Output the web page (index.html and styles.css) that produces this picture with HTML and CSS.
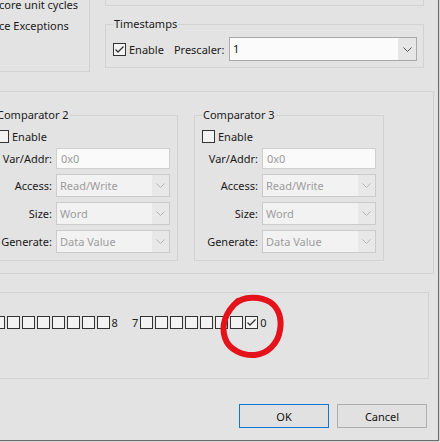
FILE: index.html
```html
<!DOCTYPE html>
<html>
  <head>
    <title>Trace Configuration</title>
    <link rel="stylesheet" href="styles.css">
  </head>

  <body>
    <div class="dialog">
      <div class="sheet">
        <div class="top-row">
          <div class="group trace">
            <div class="option">core unit cycles</div>
            <div class="option">ce Exceptions</div>
          </div>
          <div class="right-col">
            <div class="group itm"></div>
            <div class="group timestamps">
              <div class="legend">Timestamps</div>
              <div class="ts-row">
                <span class="check">
                  <svg width="11" height="11" viewBox="0 0 11 11"><path d="M1.5 5.5 L4 8 L9.5 2.5" /></svg>
                </span>
                <span class="check-label">Enable</span>
                <span class="prescaler-label">Prescaler:</span>
                <div class="combo ts-combo">
                  <span class="combo-value">1</span>
                  <span class="combo-btn">
                    <svg width="9" height="5" viewBox="0 0 9 5"><polyline points="0.5,0.5 4.5,4.5 8.5,0.5" /></svg>
                  </span>
                </div>
              </div>
            </div>
          </div>
        </div>

        <div class="group watchpoints">
          <div class="group comparator">
            <div class="legend">Comparator 2</div>
            <div class="enable-row">
              <span class="check"></span>
              <span class="check-label">Enable</span>
            </div>
            <div class="field">
              <span class="field-label">Var/Addr:</span>
              <div class="input">0x0</div>
            </div>
            <div class="field">
              <span class="field-label">Access:</span>
              <div class="combo disabled">
                <span class="combo-value">Read/Write</span>
                <span class="combo-btn"><svg width="9" height="5" viewBox="0 0 9 5"><polyline points="0.5,0.5 4.5,4.5 8.5,0.5" /></svg></span>
              </div>
            </div>
            <div class="field">
              <span class="field-label">Size:</span>
              <div class="combo disabled">
                <span class="combo-value">Word</span>
                <span class="combo-btn"><svg width="9" height="5" viewBox="0 0 9 5"><polyline points="0.5,0.5 4.5,4.5 8.5,0.5" /></svg></span>
              </div>
            </div>
            <div class="field">
              <span class="field-label">Generate:</span>
              <div class="combo disabled">
                <span class="combo-value">Data Value</span>
                <span class="combo-btn"><svg width="9" height="5" viewBox="0 0 9 5"><polyline points="0.5,0.5 4.5,4.5 8.5,0.5" /></svg></span>
              </div>
            </div>
          </div>

          <div class="group comparator">
            <div class="legend">Comparator 3</div>
            <div class="enable-row">
              <span class="check"></span>
              <span class="check-label">Enable</span>
            </div>
            <div class="field">
              <span class="field-label">Var/Addr:</span>
              <div class="input">0x0</div>
            </div>
            <div class="field">
              <span class="field-label">Access:</span>
              <div class="combo disabled">
                <span class="combo-value">Read/Write</span>
                <span class="combo-btn"><svg width="9" height="5" viewBox="0 0 9 5"><polyline points="0.5,0.5 4.5,4.5 8.5,0.5" /></svg></span>
              </div>
            </div>
            <div class="field">
              <span class="field-label">Size:</span>
              <div class="combo disabled">
                <span class="combo-value">Word</span>
                <span class="combo-btn"><svg width="9" height="5" viewBox="0 0 9 5"><polyline points="0.5,0.5 4.5,4.5 8.5,0.5" /></svg></span>
              </div>
            </div>
            <div class="field">
              <span class="field-label">Generate:</span>
              <div class="combo disabled">
                <span class="combo-value">Data Value</span>
                <span class="combo-btn"><svg width="9" height="5" viewBox="0 0 9 5"><polyline points="0.5,0.5 4.5,4.5 8.5,0.5" /></svg></span>
              </div>
            </div>
          </div>
        </div>

        <div class="group port-enable">
          <div class="bits">
            <div class="byte">
              <span class="bit-num">15</span>
              <span class="check"></span><span class="check"></span><span class="check"></span><span class="check"></span>
              <span class="check"></span><span class="check"></span><span class="check"></span><span class="check"></span>
              <span class="bit-num">8</span>
            </div>
            <div class="byte">
              <span class="bit-num">7</span>
              <span class="check"></span><span class="check"></span><span class="check"></span><span class="check"></span>
              <span class="check"></span><span class="check"></span><span class="check"></span>
              <span class="check">
                <svg width="11" height="11" viewBox="0 0 11 11"><path d="M1.5 5.5 L4 8 L9.5 2.5" /></svg>
              </span>
              <span class="bit-num">0</span>
            </div>
          </div>
        </div>

        <div class="buttons">
          <button class="btn btn-default">OK</button>
          <button class="btn">Cancel</button>
        </div>
      </div>

      <!-- hand drawn marker around port 0 -->
      <svg class="marker" width="75" height="70" viewBox="0 0 75 70">
        <path d="M20 12 C28 4, 45 4, 55 10 C64 16, 67 27, 65 38 C63 52, 52 62, 40 63 C28 64, 14 58, 10 46 C6 34, 10 20, 23 9" />
      </svg>
    </div>
  </body>
</html>
```

FILE: styles.css
```css
body {
  margin: 0;
  background-color: #d6d6d6;
  color: #1a1a1a;
  font-family: "Noto Sans", "Liberation Sans", sans-serif;
  font-size: 11px;
}

.dialog {
  position: relative;
  width: 438px;
  height: 440px;
  background-color: #e3e3e3;
  border-right: 1px solid #6c6c6c;
  border-bottom: 1px solid #6c6c6c;
  overflow: hidden;
}

/* the visible part starts a bit left of and above the window */
.sheet {
  margin: -20px 0 0 -20px;
}

.group {
  box-sizing: border-box;
  border: 1px solid #d2d2d2;
}

.legend {
  width: fit-content;
  margin: -9px 0 -7px 7px;
  padding: 0 1px;
  line-height: 16px;
  background-color: #e3e3e3;
}

.top-row {
  display: flex;
}

.trace {
  width: 110px;
  height: 92px;
  padding: 16px 0 0 18px;
}

.option {
  line-height: 16px;
  white-space: nowrap;
}

.option + .option {
  margin-top: 5px;
}

.right-col {
  width: 319px;
  margin-left: 15px;
}

.itm {
  height: 26px;
}

.timestamps {
  height: 44px;
  margin-top: 18px;
}

.ts-row {
  display: flex;
  align-items: center;
  padding: 12px 6px 0 7px;
}

.check {
  display: flex;
  align-items: center;
  justify-content: center;
  flex: none;
  box-sizing: border-box;
  width: 13px;
  height: 13px;
  border: 1px solid #333;
  background-color: #f3f3f3;
}

.check svg {
  fill: none;
  stroke: #333;
  stroke-width: 1.3;
}

.check-label {
  margin-left: 3px;
}

.prescaler-label {
  margin-left: 10px;
}

.combo {
  display: flex;
  box-sizing: border-box;
  height: 23px;
  width: 114px;
  border: 1px solid #cbcbcb;
  background-color: #f2f2f2;
}

.combo-value {
  flex: 1;
  padding-left: 3px;
  line-height: 21px;
  white-space: nowrap;
}

.combo-btn {
  display: flex;
  align-items: center;
  justify-content: center;
  width: 17px;
  background-color: #e8e8e8;
}

.combo-btn svg {
  fill: none;
  stroke: #b4b4b4;
  stroke-width: 1;
}

.ts-combo {
  width: 188px;
  height: 24px;
  margin-left: auto;
  border-color: #a9a9a9;
  background-color: #fbfbfb;
}

.ts-combo .combo-value {
  line-height: 22px;
  color: #111;
}

.ts-combo .combo-btn {
  width: 18px;
  background-color: #e6e6e6;
}

.ts-combo .combo-btn svg {
  stroke: #555;
}

.disabled .combo-value {
  color: #9d9d9d;
}

.watchpoints {
  display: flex;
  gap: 16px;
  width: 454px;
  height: 183px;
  margin-top: 19px;
  padding: 23px 0 12px 7px;
}

.comparator {
  width: 190px;
  height: 146px;
  padding: 0 7px 6px 7px;
}

.comparator .legend {
  margin-left: 0;
}

.enable-row {
  display: flex;
  align-items: center;
  height: 13px;
  margin: 14px 0 1px;
}

.field {
  display: flex;
  align-items: center;
  margin-top: 5px;
}

.field-label {
  width: 56px;
  margin-right: 4px;
  text-align: right;
  white-space: nowrap;
}

.input {
  box-sizing: border-box;
  width: 114px;
  height: 21px;
  padding-left: 4px;
  line-height: 19px;
  border: 1px solid #cfcfcf;
  background-color: #fafafa;
  color: #999;
}

.port-enable {
  width: 469px;
  height: 87px;
  margin: 18px 0 0 -20px;
  padding: 23px 0 0 16px;
}

.bits {
  display: flex;
  align-items: center;
  height: 13px;
}

.byte {
  display: flex;
  align-items: center;
  gap: 2px;
}

.byte + .byte {
  margin-left: 14px;
}

.bit-num {
  color: #222;
}

.buttons {
  display: flex;
  justify-content: flex-end;
  gap: 8px;
  margin-top: 25px;
  padding-right: 11px;
}

.btn {
  width: 90px;
  height: 24px;
  padding: 0;
  border: 1px solid #adadad;
  background-color: #e1e1e1;
  color: #111;
  font-family: inherit;
  font-size: 11px;
}

.btn-default {
  border-color: #0a78d4;
}

.marker {
  position: absolute;
  left: 215px;
  top: 292px;
  fill: none;
  stroke: #e3121b;
  stroke-width: 6;
  stroke-linecap: round;
}
```
